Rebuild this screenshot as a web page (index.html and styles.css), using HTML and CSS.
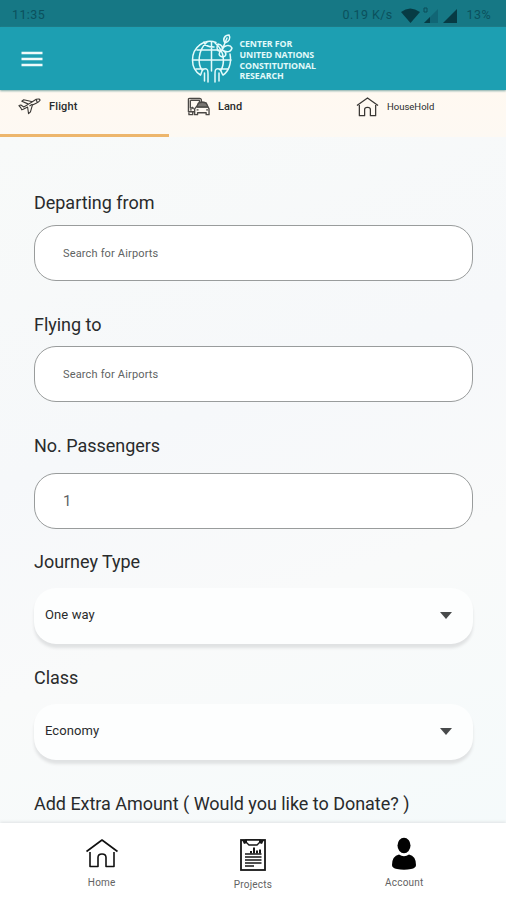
FILE: index.html
```html
<!DOCTYPE html>
<html lang="en">
<head>
<meta charset="utf-8">
<title>Book a trip</title>
<link rel="stylesheet" href="styles.css">
</head>
<body>
<div class="status">
  <span class="clock">11:35</span>
  <span class="speed">0.19 K/s</span>
  <svg class="signals" width="60" height="18" viewBox="0 0 60 18">
    <path d="M1 6Q10 -1 20 6L10.500 17Z" fill="#073b44"/>
    <path d="M24 17L38 3V17Z" fill="#116675"/>
    <path d="M24 17L30 11V17Z" fill="#073b44"/>
    <path d="M24 2h3v4h-3z" fill="none" stroke="#0a4d59"/>
    <path d="M43 17L57 3V17Z" fill="#073b44"/>
  </svg>
  <span class="battery">13%</span>
</div>
<header class="appbar">
  <svg class="menu" width="22" height="16" viewBox="0 0 22 16"><path d="M.5 2h21M.5 8h21M.5 14h21" stroke="#effafa" stroke-width="2.700"/></svg>
  <div class="brand">
    <svg width="44" height="52" viewBox="0 0 44 52" fill="none" stroke="#e5fbfb" stroke-width="1.500" stroke-linecap="round">
      <path d="M26 9.500C15 5 2.500 14 2.500 27C2.500 34 5.500 39 10.500 42C12 40 11 37 14 36C18 35 18 38 18 41V49M40 21C42 31 38 39 33 42C31 40 32 37 29 36C25 35 25 38 25 41V49"/>
      <path d="M21.500 9V38M17 9C7 18 8 32 12 37M25 10C36 19 34 32 31 37M14 9C15 13 19 14 24 14M7 17H29M3 27H41M6 36H13M30 36H38M14.500 40V48M29 40V48"/>
      <path d="M32 17C27 20 26 15 28 11C32 12 33 14 32 17ZM32 17C34 12 40 11 42 15C41 19 37 20 32 17ZM32 17C37 19 37 23 33 24C28 23 28 20 32 17ZM35 10C32 6 35 2 39 2C41 5 39 9 35 10ZM32 17L37 5"/>
    </svg>
    <div class="brand-name">CENTER FOR<br>UNITED NATIONS<br>CONSTITUTIONAL<br>RESEARCH</div>
  </div>
</header>
<nav class="tabs">
  <div class="tab active">
    <svg width="24" height="20" viewBox="0 0 24 20" fill="none" stroke="#393734" stroke-width="1.150" stroke-linejoin="round">
      <path d="M1 8.500L3 8L6 10L11 7L4 4L6 2.500L15 4.500L19 2Q23 1 23 3Q22 5 19 6L15 8L13 15L11 17L10 10L6 12L4 13L3 11ZM11 7L15 4.500M12 9L15 7M19 2L20 5"/>
    </svg>
    <span>Flight</span>
  </div>
  <div class="tab land">
    <svg width="24" height="20" viewBox="0 0 24 20" fill="none" stroke="#4b4946" stroke-width="1.400" stroke-linejoin="round">
      <path d="M8 15H1.500V2Q1.500 1 3 1H13Q15 1 15 3V5M3.500 3H13V5M3.500 3V11H7M2 16V18H6V15M3 13H5M7 12L5 10"/>
      <path d="M8 18V12L10.500 9L12 6Q16 4 20 6L21.500 9L23 12V18H20V16H11V18ZM10.500 10H21.500M10 13H12M20 13H22"/>
      <path d="M12 6Q16 4 20 6L21.500 10H10.500Z" fill="#4b4946" opacity=".75"/>
    </svg>
    <span>Land</span>
  </div>
  <div class="tab household">
    <svg width="24" height="22" viewBox="0 0 24 22" fill="none" stroke="#393734" stroke-width="1.300" stroke-linejoin="round">
      <path d="M1 9.500L12 1.500L23 9.500M3.500 9V20H9V13.500Q9 11.500 12 11.500Q15 11.500 15 13.500V20H20.500V9"/>
    </svg>
    <span>HouseHold</span>
  </div>
</nav>
<main class="form">
  <div class="field"><label>Departing from</label><div class="input">Search for Airports</div></div>
  <div class="field"><label class="low">Flying to</label><div class="input">Search for Airports</div></div>
  <div class="field passengers"><label>No. Passengers</label><div class="input number">1</div></div>
  <div class="field journey"><label>Journey Type</label><div class="select"><span>One way</span><i class="caret"></i></div></div>
  <div class="field class"><label class="low">Class</label><div class="select"><span>Economy</span><i class="caret"></i></div></div>
  <label class="extra">Add Extra Amount ( Would you like to Donate? )</label>
</main>
<footer class="bottom">
  <div class="item home">
    <svg width="34" height="32" viewBox="0 0 34 32" fill="none" stroke="#111" stroke-width="1.600" stroke-linejoin="round">
      <path d="M1.500 13.500L17 2L32.500 13.500M5 14V28.500H13V19.500Q13 16 17 16Q21 16 21 19.500V28.500H29V14"/>
    </svg>
    <span>Home</span>
  </div>
  <div class="item projects">
    <svg width="26" height="32" viewBox="0 0 26 32" fill="none" stroke="#171717">
      <rect x="1" y="1" width="24" height="30" stroke-width="1.800"/>
      <path d="M6 1H20V3L17 6H9L6 3Z" fill="#fff" stroke-width="1.400"/>
      <path d="M2 1H7V4L4 5ZM19 1H24L22 5L19 4Z" fill="#171717" stroke="none"/>
      <path d="M11 14.500V12M14 14.500V8.500M17 14.500V11.500M20 14.500V10.500" stroke-width="2"/>
      <path d="M5 15H21.500M5 18H21.500M5 21H21.500M5 24H21.500M5 27H14" stroke-width="1.400"/>
    </svg>
    <span>Projects</span>
  </div>
  <div class="item account">
    <svg width="26" height="34" viewBox="0 0 26 34" fill="#020202">
      <ellipse cx="13" cy="8.500" rx="6.500" ry="7.700"/>
      <path d="M8 17.500Q13 21 18 17.500Q25 19 25 28Q25 31 20 32Q13 33.500 6 32Q1 31 1 28Q1 19 8 17.500Z"/>
    </svg>
    <span>Account</span>
  </div>
</footer>
</body>
</html>
```

FILE: styles.css
```css
* { box-sizing: border-box; }
body {
  margin: 0;
  width: 506px;
  height: 900px;
  overflow: hidden;
  display: flex;
  flex-direction: column;
  font-family: Roboto, "Liberation Sans", sans-serif;
  color: #292b2c;
  background: #f8fafb;
}
svg { display: block; flex: none; }
.status {
  height: 27px;
  flex: none;
  display: flex;
  align-items: center;
  padding: 2px 15px 0 12px;
  background: #167885;
  color: #0b515d;
  font-size: 12.5px;
  letter-spacing: .4px;
}
.clock { flex: 1; }
.signals { margin: 0 7px; }
.appbar {
  height: 63px;
  flex: none;
  display: flex;
  align-items: center;
  padding-left: 21px;
  background: #1d9fb2;
  box-shadow: 0 1px 2px #80aaa8;
  z-index: 1;
}
.brand { display: flex; align-items: center; margin-left: 147px; }
.brand-name {
  margin: 4px 0 0 5.5px;
  color: #e2fafa;
  font: 700 8.8px/10.7px "Open Sans", sans-serif;
  letter-spacing: -.08px;
  white-space: nowrap;
}
.tabs {
  height: 47px;
  flex: none;
  display: grid;
  grid-template-columns: 169px 169px 168px;
  background: linear-gradient(#fff9f1, #fdf9f3);
}
.tab { display: flex; align-items: center; padding: 0 0 14px 18px; gap: 8px; font-size: 11px; font-weight: 500; }
.tab svg { width: 23px; }
.active { border-bottom: 3px solid #edb66c; padding-bottom: 11px; letter-spacing: .15px; }
.household { font-size: 9.5px; font-weight: 400; }
.form {
  flex: none;
  height: 686px;
  padding: 54px 33px 0 34px;
  background: linear-gradient(160deg, #f8faf9, #f6f8fa 40%, #f9fafa 65%, #f5fafb);
}
.field { display: flex; flex-direction: column; gap: 10px; margin-bottom: 31px; }
label { display: block; font-size: 18px; line-height: 24px; letter-spacing: -.03px; white-space: nowrap; }
.field label { height: 24px; }
.field .low { padding-top: 1px; }
.input {
  height: 56px;
  display: flex;
  align-items: center;
  padding: 1px 28px 0;
  border: 1px solid #999c9c;
  border-radius: 22px;
  background: #fff;
  color: #606363;
  font-size: 11px;
  letter-spacing: .16px;
}
.number { font-size: 15px; padding-top: 0; }
.passengers { gap: 15px; margin-bottom: 21px; padding-top: 1px; }
.journey { gap: 14px; margin-bottom: 21px; }
.class { gap: 15px; margin-bottom: 32px; }
.select {
  height: 56px;
  display: flex;
  align-items: center;
  justify-content: space-between;
  padding: 0 21px 3px 11px;
  border-radius: 22px;
  background: #fdfefe;
  box-shadow: 0 4px 3px #e0e2e3;
  font-size: 13px;
  letter-spacing: .1px;
}
.caret { margin-top: 1px; border: 6.5px solid transparent; border-top: 7px solid #484a4b; border-bottom: 0; }
.bottom {
  position: relative;
  height: 77px;
  flex: none;
  display: grid;
  grid-template-columns: repeat(3, 1fr);
  padding: 0 26px;
  background: #fff;
  box-shadow: 0 -1px 3px #dfe3e4;
}
.item { display: flex; flex-direction: column; align-items: center; font-size: 10px; line-height: 12px; letter-spacing: .2px; color: #636363; }
.home { padding-top: 15px; gap: 7px; }
.projects { padding-top: 16px; gap: 8px; }
.account { padding-top: 14px; gap: 6px; }
```
